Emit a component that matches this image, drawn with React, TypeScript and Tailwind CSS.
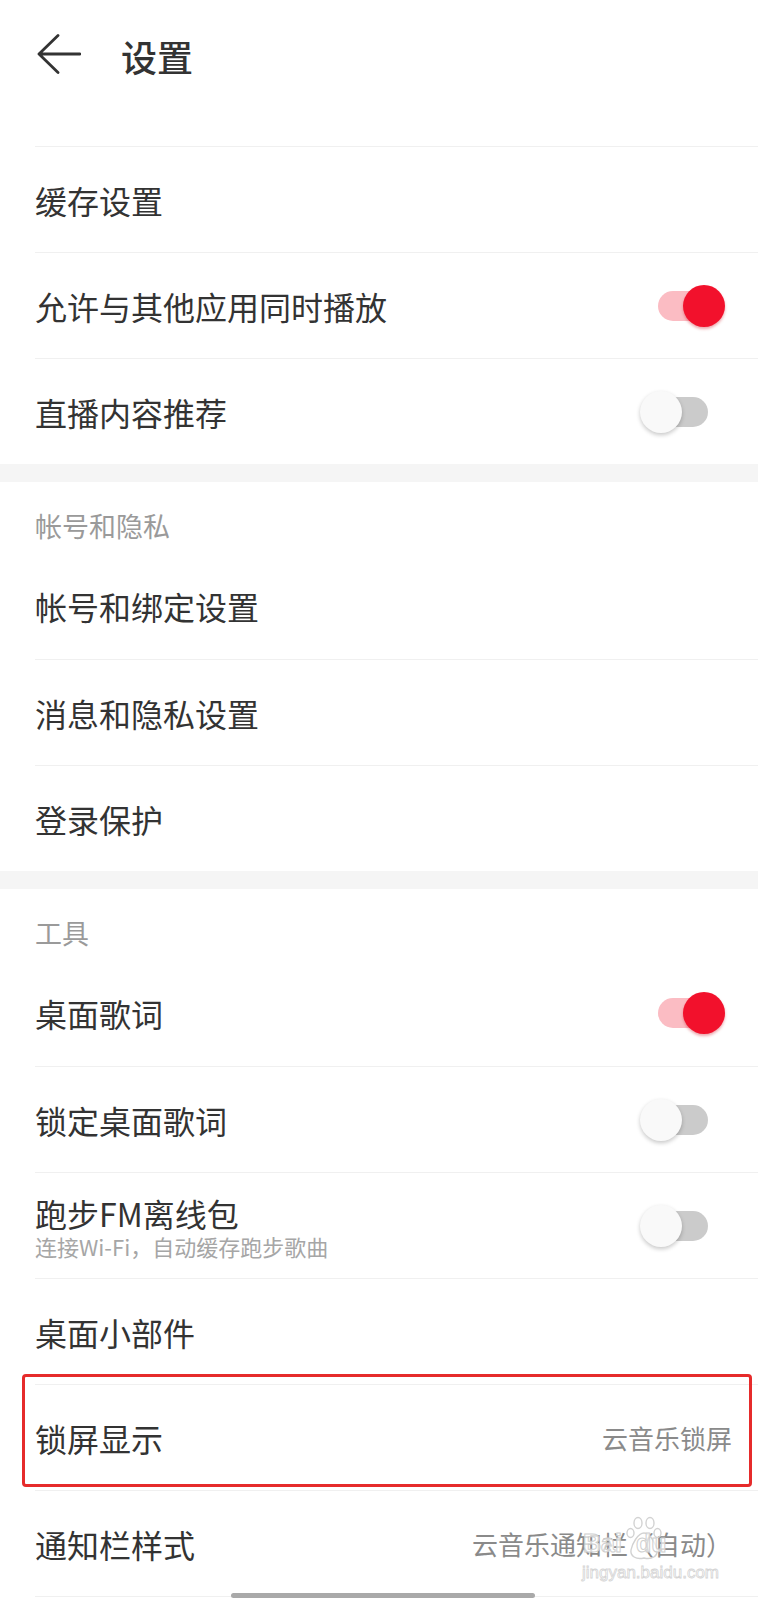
import React from "react";

const FONT = { fontFamily: '"Noto Sans CJK SC", "Noto Sans", sans-serif' };

function Toggle({ on }: { on: boolean }) {
  return (
    <div className="relative w-[85px] h-[42px] shrink-0">
      <div
        className={
          "absolute left-[18px] top-[6px] w-[50px] h-[30px] rounded-full " +
          (on ? "bg-[#fbbcc3]" : "bg-[#cbcbcb]")
        }
      />
      {on ? (
        <div className="absolute left-[43px] top-0 w-[42px] h-[42px] rounded-full bg-[#f2112c] shadow-[0_2px_3px_rgba(200,0,20,0.35)]" />
      ) : (
        <div className="absolute left-0 top-0 w-[42px] h-[42px] rounded-full bg-[#f9f9f9] shadow-[0_2px_4px_rgba(0,0,0,0.22)]" />
      )}
    </div>
  );
}

function Row({
  title,
  sub,
  toggle,
  value,
  border = true,
  children,
}: {
  title: string;
  sub?: string;
  toggle?: boolean;
  value?: string;
  border?: boolean;
  children?: React.ReactNode;
}) {
  return (
    <div className="relative pl-[35px]">
      <div
        className={
          "flex items-center h-[106px] " +
          (border ? "border-t border-[#f0f0f0]" : "")
        }
      >
        <div className="flex-1 flex flex-col justify-center">
          <div className="text-[32px] leading-[40px] text-[#333333]">{title}</div>
          {sub && (
            <div className="text-[22px] leading-[26px] text-[#a6a6a6]">{sub}</div>
          )}
        </div>
        {toggle !== undefined && (
          <div className="mr-[33px]">
            <Toggle on={toggle} />
          </div>
        )}
        {value && (
          <div className="mr-[26px] text-[26px] leading-[34px] text-[#8a8a8a]">{value}</div>
        )}
      </div>
      {children}
    </div>
  );
}

function SectionHeader({ text }: { text: string }) {
  return (
    <div className="h-[71px] pl-[35px] pt-[26px]">
      <div className="text-[27px] leading-[36px] text-[#9a9a9a]">{text}</div>
    </div>
  );
}

function Band() {
  return <div className="h-[18px] bg-[#f5f5f5]" />;
}

export default function App() {
  return (
    <div className="relative w-[758px] h-[1600px] overflow-hidden bg-white" style={FONT}>
      {/* Header */}
      <div className="h-[146px]">
        <div className="flex items-center h-[108px] pl-[37px]">
          <svg width="44" height="40" viewBox="0 0 44 40" fill="none" className="shrink-0">
            <path
              d="M21 1.5 L2 20 L21 38.5 M2 20 H43"
              stroke="#333333"
              strokeWidth="2.8"
              strokeLinecap="round"
              strokeLinejoin="round"
            />
          </svg>
          <div className="ml-[40px] text-[36px] leading-[44px] font-medium text-[#333333] mt-[4px]">
            设置
          </div>
        </div>
      </div>

      {/* Section 1 */}
      <Row title="缓存设置" />
      <Row title="允许与其他应用同时播放" toggle={true} />
      <Row title="直播内容推荐" toggle={false} />

      <Band />
      <SectionHeader text="帐号和隐私" />
      <Row title="帐号和绑定设置" border={false} />
      <Row title="消息和隐私设置" />
      <Row title="登录保护" />

      <Band />
      <SectionHeader text="工具" />
      <Row title="桌面歌词" toggle={true} border={false} />
      <Row title="锁定桌面歌词" toggle={false} />
      <Row title="跑步FM离线包" sub="连接Wi-Fi，自动缓存跑步歌曲" toggle={false} />
      <Row title="桌面小部件" />
      <Row title="锁屏显示" value="云音乐锁屏">
        <div className="absolute left-[22px] right-[6px] top-[-10px] bottom-[3px] border-[3px] border-[#e62b2b] rounded-[4px] pointer-events-none" />
      </Row>
      <Row title="通知栏样式" value="云音乐通知栏（自动）" />
      <div className="ml-[35px] border-t border-[#f0f0f0]" />

      {/* watermark */}
      <svg
        className="absolute left-[626px] top-[1516px] pointer-events-none"
        width="36"
        height="46"
        viewBox="0 0 36 46"
        fill="none"
        stroke="#d2d2d2"
        strokeWidth="1.4"
      >
        <ellipse cx="12" cy="7" rx="4" ry="5.5" />
        <ellipse cx="24" cy="7" rx="4" ry="5.5" />
        <ellipse cx="4.5" cy="17" rx="3.5" ry="4.5" />
        <ellipse cx="31.5" cy="17" rx="3.5" ry="4.5" />
        <path d="M18 17 C12 17 6 28 5 34 C4 40 10 44 18 42 C26 44 32 40 31 34 C30 28 24 17 18 17 Z" />
      </svg>
      <div
        className="absolute left-[583px] top-[1528px] text-[25px] leading-[30px] font-bold text-white/70 [-webkit-text-stroke:1px_#cfcfcf] pointer-events-none"
        style={{ fontFamily: '"Liberation Sans", sans-serif' }}
      >
        Bai
      </div>
      <div
        className="absolute left-[636px] top-[1528px] text-[25px] leading-[30px] font-bold text-white/70 [-webkit-text-stroke:1px_#cfcfcf] pointer-events-none"
        style={{ fontFamily: '"Liberation Sans", sans-serif' }}
      >
        du
      </div>
      <div
        className="absolute left-[582px] top-[1563px] text-[17px] leading-[20px] text-white [-webkit-text-stroke:0.8px_#d4d4d4] pointer-events-none"
        style={{ fontFamily: '"Liberation Sans", sans-serif' }}
      >
        jingyan.baidu.com
      </div>

      {/* home indicator */}
      <div className="absolute left-[231px] top-[1593px] w-[304px] h-[5px] rounded-full bg-[#a9a9a9]" />
    </div>
  );
}
